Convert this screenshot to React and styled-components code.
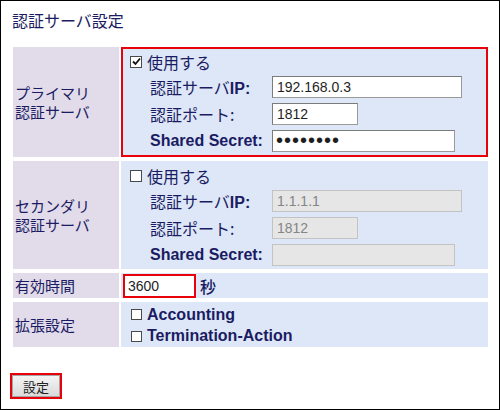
import React from 'react';
import styled, { createGlobalStyle } from 'styled-components';

const GlobalStyle = createGlobalStyle`
  html, body {
    margin: 0;
    padding: 0;
    background: #ffffff;
  }
`;

const navy = '#1b1b63';

const Page = styled.div`
  width: 500px;
  height: 410px;
  box-sizing: border-box;
  border: 1px solid #000;
  padding: 9px 0 0 9px;
  font-family: 'Liberation Sans', 'Noto Sans CJK JP', sans-serif;
  color: ${navy};
`;

const Title = styled.h1`
  margin: 0 0 17px 2px;
  font-size: 16px;
  line-height: 20px;
  font-weight: normal;
  font-family: 'Noto Sans CJK JP', sans-serif;
`;

const Form = styled.div`
  display: grid;
  grid-template-columns: 106px 367px;
  column-gap: 2px;
  row-gap: 4px;
  margin-left: 3px;
`;

const LabelCell = styled.div`
  background: #e2dbe9;
  display: flex;
  align-items: center;
  padding-left: 2px;
  font-family: 'Noto Sans CJK JP', sans-serif;
  font-size: 15px;
  line-height: 19px;
`;

const ValueCell = styled.div`
  background: #dde7f7;
  padding: ${p => p.$pad || '0'};
  min-height: ${p => p.$minH || '0'};
  box-sizing: border-box;
  box-shadow: ${p => (p.$highlight ? 'inset 0 0 0 2px #e8000b' : 'none')};
  display: flex;
  flex-direction: ${p => (p.$row ? 'row' : 'column')};
  align-items: ${p => (p.$row ? 'center' : 'stretch')};
  gap: ${p => p.$gap || '0'};
`;

const CheckLine = styled.label`
  display: flex;
  align-items: center;
  height: ${p => p.$h || '23px'};
  font-size: 16px;
`;

const Box = styled.span`
  width: ${p => p.$size || 12}px;
  height: ${p => p.$size || 12}px;
  box-sizing: border-box;
  border: 1px solid #4a4a4a;
  background: #fff;
  margin-right: ${p => p.$gap || 5}px;
  display: inline-flex;
  align-items: center;
  justify-content: center;
  flex: none;
`;

const Jp = styled.span`
  font-family: 'Noto Sans CJK JP', sans-serif;
  font-weight: normal;
`;

const Latin = styled.span`
  font-family: 'Liberation Sans', sans-serif;
  font-weight: bold;
  font-size: 16px;
`;

const Fields = styled.div`
  display: grid;
  grid-template-columns: 122px auto;
  grid-auto-rows: 27px;
  align-items: center;
  margin-left: 20px;
`;

const FieldLabel = styled.span`
  font-size: 16px;
  white-space: nowrap;
`;

const TextInput = styled.input`
  width: ${p => p.$w}px;
  height: 22px;
  box-sizing: border-box;
  border: 1px solid #9a9a9a;
  border-top-color: #7b7b7b;
  border-left-color: #7b7b7b;
  padding: 0 4px;
  font-family: 'Liberation Sans', sans-serif;
  font-size: 14px;
  color: #1e1e1e;
  background: #fff;
  outline: none;

  &:disabled {
    background: #e6e6e6;
    border-color: #c3c3c3;
    color: #858585;
  }

  &[type='password'] {
    font-size: 20px;
    letter-spacing: 1px;
    padding-left: 3px;
  }
`;

const TimeInput = styled.input`
  width: 73px;
  height: 24px;
  box-sizing: border-box;
  border: 2px solid #e8000b;
  padding: 0 3px;
  font-family: 'Liberation Sans', sans-serif;
  font-size: 14px;
  color: #1e1e1e;
  background: #fff;
  outline: none;
  margin-left: 2px;
`;

const Unit = styled.span`
  font-family: 'Noto Sans CJK JP', sans-serif;
  font-size: 16px;
  font-weight: 500;
`;

const ButtonFrame = styled.div`
  display: inline-block;
  margin-top: 26px;
  border: 2px solid #e8000b;
`;

const Button = styled.button`
  display: block;
  width: 48px;
  height: 22px;
  padding: 0;
  border: 1px solid #a5a5a5;
  background: linear-gradient(#f4f4f4, #dadada);
  font-family: 'Noto Sans CJK JP', sans-serif;
  font-size: 13px;
  color: #222;
`;

const Check = ({ checked, size, gap }) => (
  <Box $size={size} $gap={gap}>
    {checked && (
      <svg width="9" height="9" viewBox="0 0 9 9">
        <path d="M1 4.5 L3.5 7 L8 1.5" fill="none" stroke="#111" strokeWidth="1.8" />
      </svg>
    )}
  </Box>
);

const ServerCell = ({ enabled, ip, port, secret, highlight }) => (
  <ValueCell $highlight={highlight} $pad={highlight ? '3px 0 3px 9px' : '3px 0 1px 9px'}>
    <CheckLine>
      <Check checked={enabled} />
      <Jp>使用する</Jp>
    </CheckLine>
    <Fields>
      <FieldLabel><Jp>認証サーバ</Jp><Latin>IP:</Latin></FieldLabel>
      <TextInput $w={190} defaultValue={ip} disabled={!enabled} />
      <FieldLabel><Jp>認証ポート:</Jp></FieldLabel>
      <TextInput $w={86} defaultValue={port} disabled={!enabled} />
      <FieldLabel><Latin>Shared Secret:</Latin></FieldLabel>
      <TextInput
        $w={183}
        type={enabled ? 'password' : 'text'}
        defaultValue={secret}
        disabled={!enabled}
      />
    </Fields>
  </ValueCell>
);

const App = () => (
  <>
    <GlobalStyle />
    <Page>
      <Title>認証サーバ設定</Title>
      <Form>
        <LabelCell>プライマリ<br />認証サーバ</LabelCell>
        <ServerCell highlight enabled ip="192.168.0.3" port="1812" secret="secret12" />

        <LabelCell>セカンダリ<br />認証サーバ</LabelCell>
        <ServerCell ip="1.1.1.1" port="1812" secret="" />

        <LabelCell>有効時間</LabelCell>
        <ValueCell $row $gap="4px" $minH="25px">
          <TimeInput defaultValue="3600" />
          <Unit>秒</Unit>
        </ValueCell>

        <LabelCell>拡張設定</LabelCell>
        <ValueCell $pad="2px 0 0 10px">
          <CheckLine $h="21.5px">
            <Check size={11} />
            <Latin>Accounting</Latin>
          </CheckLine>
          <CheckLine $h="21.5px">
            <Check size={11} />
            <Latin>Termination-Action</Latin>
          </CheckLine>
        </ValueCell>
      </Form>
      <ButtonFrame>
        <Button>設定</Button>
      </ButtonFrame>
    </Page>
  </>
);

export default App;
